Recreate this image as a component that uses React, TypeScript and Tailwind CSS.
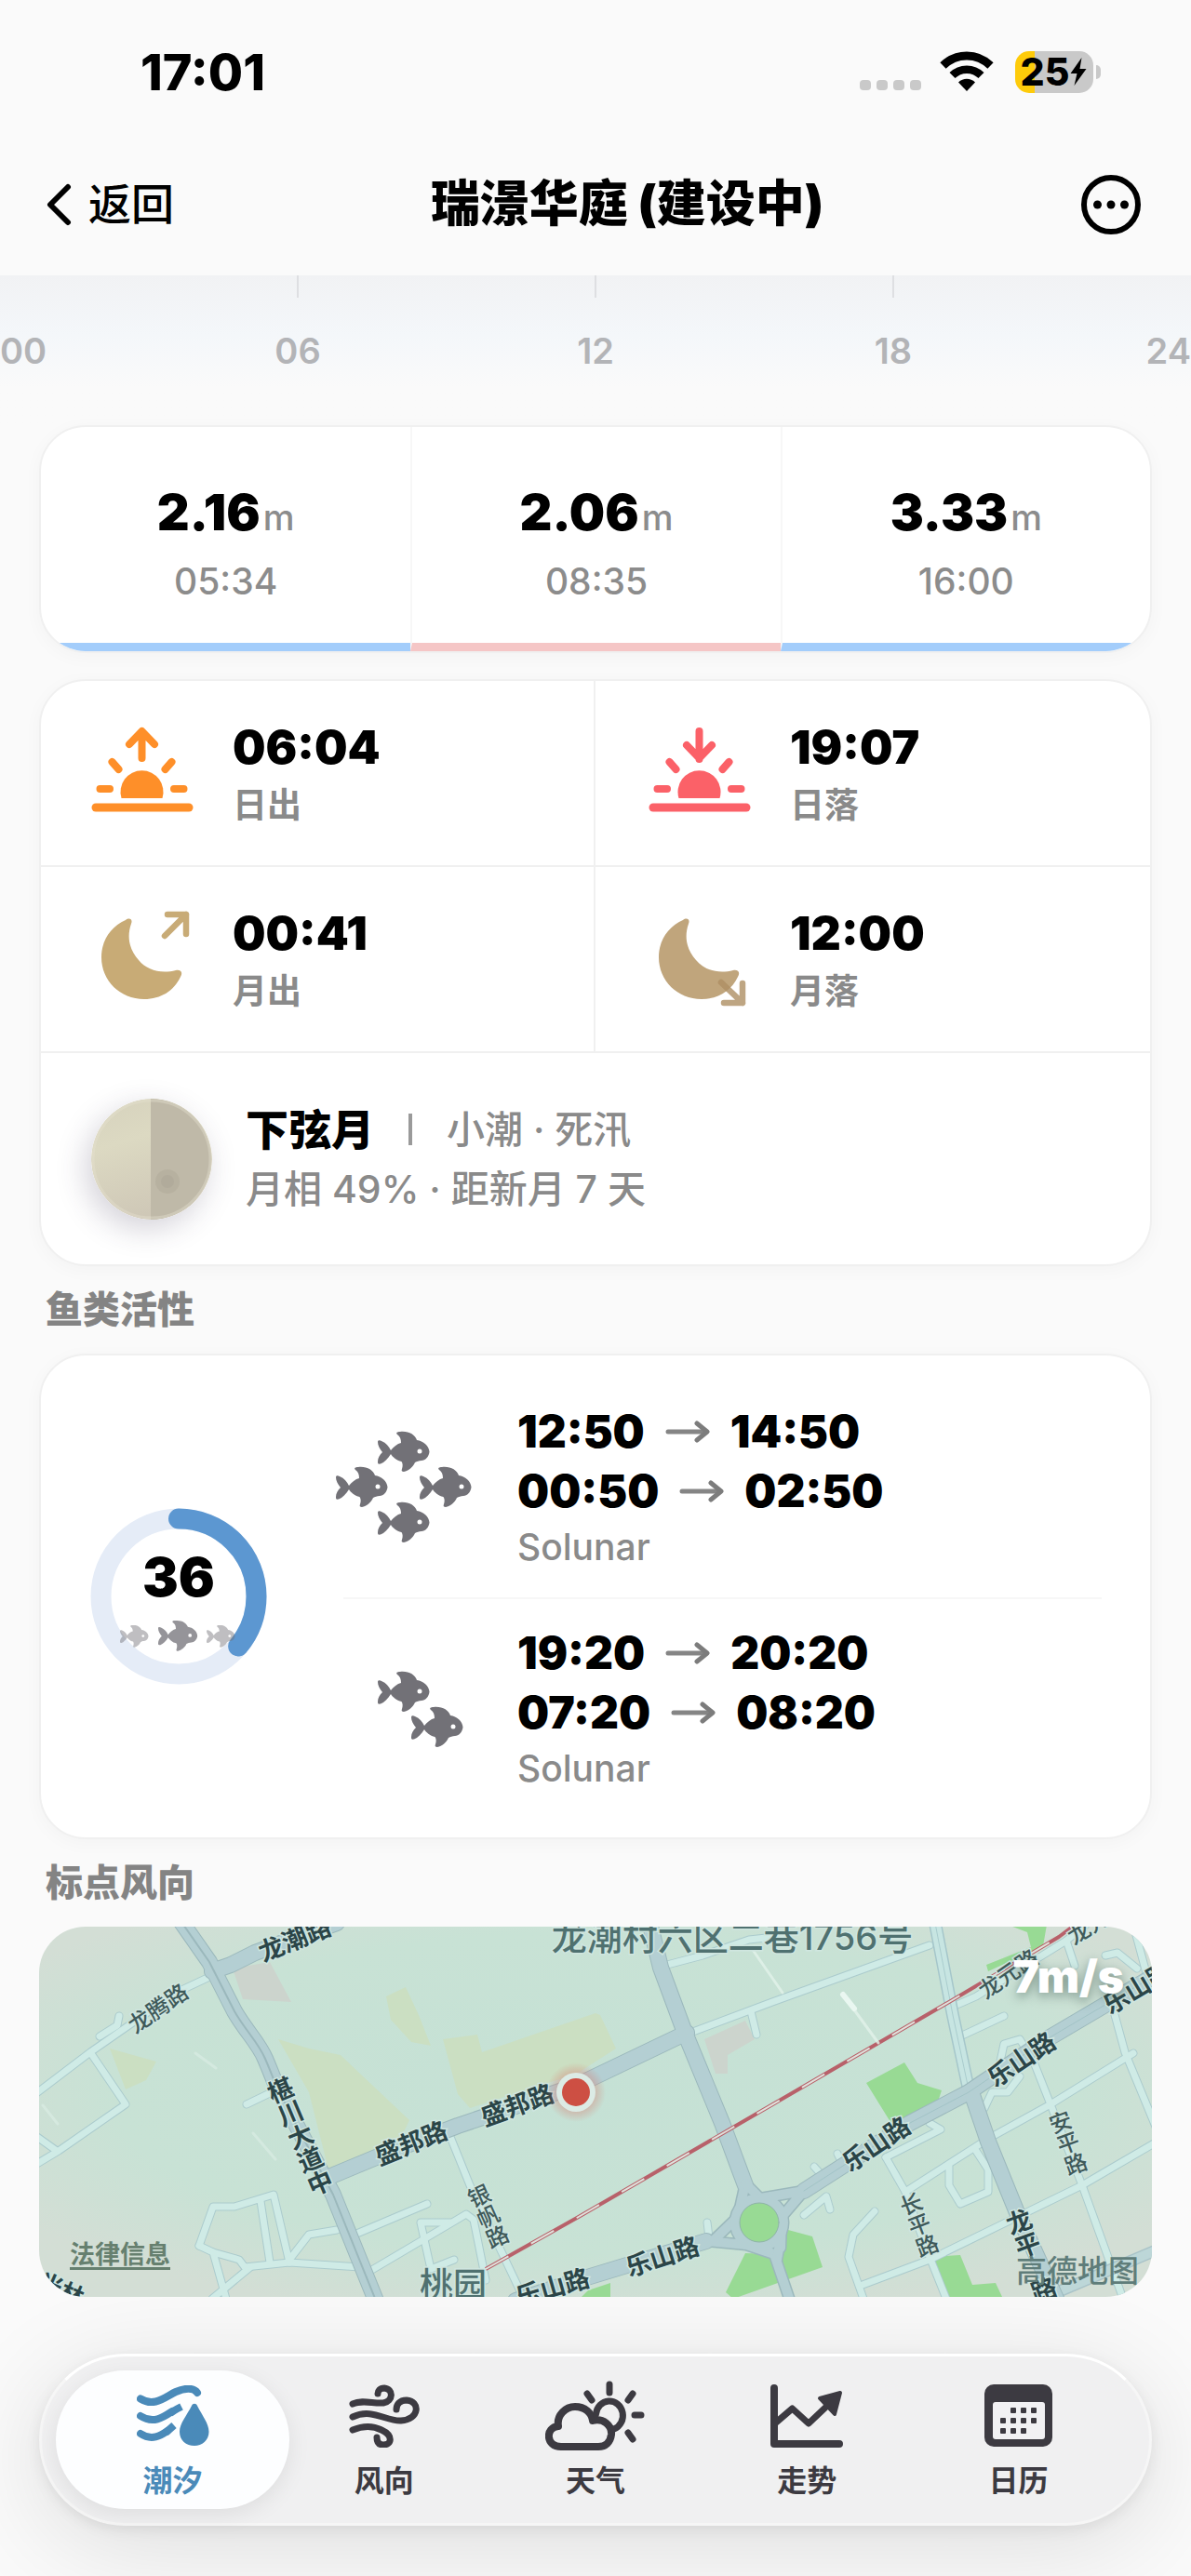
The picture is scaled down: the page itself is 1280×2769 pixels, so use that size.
import { useState } from 'react';

const FONT = "font-['Inter','Noto_Sans_CJK_SC',sans-serif]";

const CARD = 'rounded-[50px] bg-white border-2 border-[#f0f0f0] shadow-[0_4px_20px_rgba(0,0,0,0.03)] overflow-hidden';

/* ---------- icons ---------- */

function SunIcon({ down = false }: { down?: boolean }) {
    const color = down ? '#fb6168' : '#fe8f29';
    return (
        <svg width="110" height="100" viewBox="0 0 110 100" fill="none" stroke={color} strokeWidth="8" strokeLinecap="round" strokeLinejoin="round" aria-hidden="true">
            {down ? (
                <path d="M54.500 5v30M41 20l13.500 14L68 20" />
            ) : (
                <path d="M54.500 6v28M41 19L54.500 5 68 19" />
            )}
            <path d="M22.500 38l7 8M86.500 38l-7 8M9.500 67H20M89 67h10.500" />
            <path d="M5 87h100" strokeWidth="9" />
            <path d="M32.500 77a23 23 0 1 1 44 0z" fill={color} stroke="none" />
        </svg>
    );
}

function MoonIcon({ down = false }: { down?: boolean }) {
    const color = down ? '#c0a57c' : '#c8ab76';
    return (
        <svg width="110" height="104" viewBox="-11 0 110 104" fill="none" stroke={color} strokeWidth="6.500" strokeLinecap="round" strokeLinejoin="round" aria-hidden="true">
            <path
                d="M26 10C30 7 34 9 32 14 C27 28 30 42 40 53 C49 64 64 68 80 64 C85 63 88 66 85 71 C78 86 64 95 46 95 C20 95 0 75 0 50 C0 32 10 17 26 10Z"
                fill={color}
                stroke="none"
            />
            {down ? (
                <g stroke="#ae8f63" opacity="0.8">
                    <path d="M67 77l23 22M70 99h20V78" />
                </g>
            ) : (
                <path d="M68 27L91 4M71 4h20v21" />
            )}
        </svg>
    );
}

interface FishProps {
    x: number;
    y: number;
    scale?: number;
    opacity?: number;
}

function Fish({ x, y, scale = 1, opacity = 1 }: FishProps) {
    return (
        <g transform={`translate(${x} ${y}) scale(${scale})`} opacity={opacity}>
            <path
                d="M0 11C0 9 2 9 4 10C9 12 12 16 14 20C17 16 21 13 25 12C25 8 24 5 21 3C19 1 21 0 24 0C33 -1 40 3 42 9C49 10 55 15 55.500 21.500C55 27 51 31 47 31C44 31 42 32 40 33C38 38 33 42 28 43C26 43 25 42 26 40C27 37 27 34 25.500 32C20 31 16 27 14 24C11 29 7 33 3 34.500C0 35 0 34 0 32C0 28 2 25 5 22C2 18 0 15 0 11Z"
                fill="#727177"
            />
            <circle cx="45" cy="21" r="2.500" fill="#fff" />
        </g>
    );
}

function ArrowRight() {
    return (
        <svg width="50" height="24" viewBox="0 0 50 24" fill="none" stroke="#858585" strokeWidth="5" strokeLinecap="round" strokeLinejoin="round" aria-hidden="true">
            <path d="M4 12h41" />
            <path d="M35 3l11 9-11 9" stroke="#7c7c7c" />
        </svg>
    );
}

function TideIcon() {
    return (
        <svg width="78" height="66" viewBox="0 0 78 66" fill="none" stroke="#4a8ab9" strokeWidth="8" strokeLinecap="round" aria-hidden="true">
            <path d="M4 14.500C19 24 31 12 42 7C51 3 61 2 65 8" />
            <path d="M4 33C18 42 29 34 38 28" />
            <path d="M36 30C40 27 44 25 48 23" strokeLinecap="butt" />
            <path d="M4 52C16 60 26 54 33 49" />
            <path d="M31 51L40 43" strokeLinecap="butt" />
            <path d="M59 22C60 19 64 19 65 22C70 32 77.500 41 77.500 50C77.500 59 70 65 62 65C53 65 46 59 46 50C46 41 54 32 59 22Z" fill="#4a8ab9" stroke="none" />
        </svg>
    );
}

function WindIcon() {
    return (
        <svg width="76" height="68" viewBox="0 0 76 68" fill="none" stroke="#3c3a41" strokeWidth="7" strokeLinecap="round" aria-hidden="true">
            <path d="M4 21C15 16 26 21 37 20C48 18 48 5 38 4C33 4 31 7 31 10" />
            <path d="M4 35C25 25 40 40 56 39C76 38 77 18 62 17C54 17 51 22 51 27" />
            <path d="M4 49C16 44 27 45 35 49C48 55 46 65 37 65C32 65 30 62 30 57" />
        </svg>
    );
}

function WeatherIcon() {
    return (
        <svg width="107" height="76" viewBox="0 0 107 76" fill="none" stroke="#3c3a41" strokeWidth="8" strokeLinecap="round" strokeLinejoin="round" aria-hidden="true">
            <path d="M17 71C0 71 0 50 14 49C12 37 22 28 32 28C43 28 50 35 51 43C62 40 72 48 71 58C70 66 65 71 57 71Z" />
            <path d="M54.500 36A14.500 15.500 0 1 1 74 52" strokeWidth="7" />
            <path d="M69 4v9M45 14l5 7M94 14l-5 7M96 37h7M89 56l5 7" strokeWidth="7" />
        </svg>
    );
}

function TrendIcon() {
    return (
        <svg width="80" height="70" viewBox="0 0 80 70" fill="none" stroke="#3c3a41" strokeWidth="8" strokeLinecap="round" strokeLinejoin="round" aria-hidden="true">
            <path d="M5 5v60h70" />
            <path d="M7 42L24.500 27L42 43L61 25" strokeWidth="7" />
            <path d="M54 16L76 10L70 33Z" fill="#3c3a41" strokeWidth="4" />
        </svg>
    );
}

function CalendarIcon() {
    const dots = [
        [31, 28], [42, 28], [53, 28],
        [20, 39], [31, 39], [42, 39], [53, 39],
        [20, 50], [31, 50], [42, 50],
    ];
    return (
        <svg width="73" height="68" viewBox="0 0 73 68" aria-hidden="true">
            <rect width="73" height="67" rx="10" fill="#3c3a41" />
            <rect x="9" y="19" width="56" height="40" rx="3" fill="#f1f1f3" />
            {dots.map(([x, y]) => (
                <rect key={`${x}-${y}`} x={x - 3} y={y - 3} width="6" height="6" rx="1" fill="#3c3a41" />
            ))}
        </svg>
    );
}

/* ---------- map ---------- */

const MAIN_ROADS = [
    'M153 -5L183 38L210 91C222 112 236 125 243 142C250 158 252 165 258 178L316 288L362 402',
    'M186 48L206 41L232 28L320 -4',
    'M314 268L379 241L450 214L577 171L696 114',
    'M656 -5L668 44L694 114L734 211L759 278',
    'M1200 52L1083 121L999 178L936 211L822 284',
    'M717 338L589 377L512 402',
    'M1003 181L1020 231L1050 305L1094 402',
];

const JUNCTION_ROADS = [
    'M759 276L751 312L724 338',
    'M759 276L775 292L822 284L798 312L797 345',
    'M717 338L760 342L790 352L807 402',
    'M797 335L793 358',
];

const SIDE_ROADS = [
    'M181 55L147 71L55 135L-4 180',
    'M57 138L93 191L21 241L-4 256',
    'M-2 226L19 241',
    'M65 118L84 106L86 96',
    'M223 191L250 178',
    'M172 343L187 301L210 301L252 288L269 361',
    'M238 295L248 361',
    'M172 343L187 350L201 400',
    'M187 350L215 358L221 366L269 361L345 366',
    'M227 366L186 400',
    'M269 358L290 331L320 326',
    'M339 331L417 298',
    'M356 370L444 318L459 309L467 315L480 380',
    'M442 318L410 318L421 368L446 358',
    'M440 221L463 278L520 398',
    'M700 114L788 81L957 20',
    'M675 41L713 31L763 14L800 10',
    'M765 91L771 116',
    'M982 86L1007 75L1104 15L1125 -2',
    'M990 118L1037 96',
    'M1155 91L1167 135L1200 215',
    'M1176 136L1087 191L1020 228L931 285',
    'M1070 148L1087 191L1121 278L1165 400',
    'M1200 232L1121 278L957 358L885 385',
    'M910 248L931 285L957 355L975 400',
    'M910 248L969 218L957 211',
    'M898 306L875 331L870 355L886 400',
    'M978 258L978 278L990 298L1020 285L1020 261L1007 241',
    'M1016 195L1024 178L1041 178L1054 161',
    'M1033 145L1037 126L1054 121L1062 134',
    'M1146 31L1159 28L1180 45',
    'M1176 -2L1190 50',
    'M1104 15L1113 42',
    'M822 310L846 290L850 304',
    'M718 318L720 334',
    'M833 258L842 268',
    'M858 244L864 256',
];

const PARKS = [
    'M889 168L930 146L944 168L970 176L966 188L930 208L915 210Z',
    'M805 326L831 333L842 366L746 400L738 393L759 351L790 352Z',
    'M961 355L990 353L1003 385L1028 383L1036 400L976 400Z',
    'M581 400L590 391L614 383V400Z',
    'M1041 -2H1083L1079 21L1020 48L1018 41L1066 22L1062 6Z',
];

const FIELDS = [
    'M257 121L290 131L324 138L345 158L398 208L385 235L311 261L290 178Z',
    'M373 75L394 65L408 95L421 128L400 124L378 100Z',
    'M434 121L471 116L476 135L598 93L603 95L620 131L578 158L463 195L450 180Z',
    'M76 131L126 145L115 165L93 175Z',
];

interface RoadLabel {
    text: string;
    x: number;
    y: number;
    angle: number;
    size: number;
    minor?: boolean;
    vertical?: boolean;
}

const LABELS: RoadLabel[] = [
    { text: '龙潮路', x: 275, y: 14, angle: -22, size: 27 },
    { text: '龙腾路', x: 128, y: 88, angle: -35, size: 24, minor: true },
    { text: '椹川大道中', x: 279, y: 226, angle: -23, size: 27, vertical: true },
    { text: '盛邦路', x: 400, y: 233, angle: -22, size: 27 },
    { text: '盛邦路', x: 514, y: 192, angle: -20, size: 27 },
    { text: '银帆路', x: 481, y: 312, angle: -24, size: 24, minor: true, vertical: true },
    { text: '乐山路', x: 552, y: 388, angle: -16, size: 27 },
    { text: '乐山路', x: 670, y: 355, angle: -18, size: 27 },
    { text: '乐山路', x: 900, y: 234, angle: -34, size: 27 },
    { text: '乐山路', x: 1056, y: 143, angle: -34, size: 27 },
    { text: '乐山路', x: 1181, y: 66, angle: -31, size: 27 },
    { text: '龙元路', x: 1042, y: 51, angle: -35, size: 24, minor: true },
    { text: '龙元', x: 1128, y: 0, angle: -32, size: 24, minor: true },
    { text: '长平路', x: 944, y: 321, angle: -21, size: 24, minor: true, vertical: true },
    { text: '安平路', x: 1104, y: 233, angle: -20, size: 24, minor: true, vertical: true },
    { text: '龙平', x: 1056, y: 330, angle: -20, size: 27, vertical: true },
    { text: '路', x: 1080, y: 391, angle: -20, size: 27 },
    { text: '米林', x: 24, y: 390, angle: 24, size: 25 },
];

function WindMap() {
    return (
        <div className="relative overflow-hidden rounded-[50px]">
            <svg viewBox="0 0 1196 398" className="block w-full" role="img" aria-label="标点风向">
                <defs>
                    <radialGradient id="tint" cx="50%" cy="45%" r="62%">
                        <stop offset="0" stopColor="#c5e1d5" />
                        <stop offset="0.7" stopColor="#c8e2d5" />
                        <stop offset="1" stopColor="#d3ded5" />
                    </radialGradient>
                    <radialGradient id="glow">
                        <stop offset="0.4" stopColor="#d9796c" stopOpacity="0.6" />
                        <stop offset="1" stopColor="#d9796c" stopOpacity="0" />
                    </radialGradient>
                </defs>
                <rect width="1196" height="398" fill="url(#tint)" />

                {FIELDS.map((d) => <path key={d} d={d} fill="#cbdfc2" />)}
                <path d="M208 45L248 38L271 81L219 78ZM715 121L759 101L769 121L740 138V158H727Z" fill="#ccd4cd" />
                {PARKS.map((d) => <path key={d} d={d} fill="#98da94" />)}

                <g fill="none" strokeLinecap="round" strokeLinejoin="round">
                    {SIDE_ROADS.map((d) => <path key={d} d={d} stroke="#abcbcd" strokeWidth="9" />)}
                    {SIDE_ROADS.map((d) => <path key={d} d={d} stroke="#cfebe6" strokeWidth="7" />)}
                    <path d="M963 -4L982 95L999 175" stroke="#a5c6ca" strokeWidth="14" />
                    <path d="M963 -4L982 95L999 175" stroke="#c7e5e2" strokeWidth="11" />
                    <path d="M963 -4L982 95L999 175" stroke="#a9cccd" strokeWidth="1" />
                    <path d="M1087 396L1200 348" stroke="#a9c3c8" strokeWidth="13" />
                    <path d="M1087 396L1200 348" stroke="#bdd7d8" strokeWidth="10" />

                    {MAIN_ROADS.map((d) => <path key={d} d={d} stroke="#9bb8bc" strokeWidth="18" />)}
                    {JUNCTION_ROADS.map((d) => <path key={d} d={d} stroke="#9bb8bc" strokeWidth="13" />)}
                    <circle cx="774" cy="318" r="26" stroke="#9bb8bc" strokeWidth="13" />
                    {MAIN_ROADS.map((d) => <path key={d} d={d} stroke="#b4cfd3" strokeWidth="16" />)}
                    {JUNCTION_ROADS.map((d) => <path key={d} d={d} stroke="#b4cfd3" strokeWidth="10" />)}
                    <circle cx="774" cy="318" r="26" stroke="#b4cfd3" strokeWidth="10" />
                    <circle cx="774" cy="318" r="21" fill="#98da94" stroke="#8fb5a8" strokeWidth="1" />
                    <path d={MAIN_ROADS[0]} stroke="#9bb8bc" strokeWidth="2" />
                    <path d={MAIN_ROADS[4]} stroke="#a2c3c6" strokeWidth="1" />

                    <path d="M480 368L578 313L742 218L978 81L1096 11L1116 -4" stroke="#b8616a" strokeWidth="4" strokeLinecap="butt" />
                    <path d="M480 368L578 313L742 218L978 81L1096 11L1116 -4" stroke="#dfe2dc" strokeWidth="2" strokeDasharray="28 28" strokeLinecap="butt" />

                    {/* wind streaks */}
                    <path d="M767 25L799 71M864 73L902 125" stroke="#e2f3ea" strokeWidth="3" opacity="0.8" />
                    <path d="M864 73L876 88" stroke="#eaf7f1" strokeWidth="6" />
                    <path d="M168 136L190 152M230 222L254 250M4 192L20 212" stroke="#dcefe6" strokeWidth="3" opacity="0.6" />
                </g>

                {LABELS.map((label, i) => (
                    <text
                        key={i}
                        transform={`translate(${label.x} ${label.y}) rotate(${label.angle})`}
                        fontSize={label.size}
                        fontWeight={label.minor ? 500 : 700}
                        fill={label.minor ? '#3f5a5a' : '#2b4548'}
                        stroke="#cfe6e0"
                        strokeWidth="3"
                        paintOrder="stroke"
                        textAnchor="middle"
                        dominantBaseline="central"
                        className={label.vertical ? '[writing-mode:vertical-rl]' : ''}
                    >
                        {label.text}
                    </text>
                ))}
                <g fill="#4f7170" stroke="#cfe6e0" strokeWidth="3" paintOrder="stroke" textAnchor="middle" fontWeight="500">
                    <text x="745" y="25" fontSize="38">龙潮村六区二巷1756号</text>
                    <text x="445" y="398" fontSize="36">桃园</text>
                </g>

                <circle cx="577" cy="178" r="32" fill="url(#glow)" />
                <circle cx="577" cy="178" r="21" fill="#dcebe5" />
                <circle cx="577" cy="178" r="15" fill="#cd4f43" />
            </svg>
            <a href="#legal" className="absolute bottom-[28px] left-[33px] text-[27px] leading-[34px] font-bold text-[#66806f] underline decoration-3 underline-offset-4">
                法律信息
            </a>
            <span className="absolute top-[24px] right-[30px] text-[48px] leading-[60px] font-black text-white [text-shadow:0_4px_12px_rgba(60,90,80,0.6)]">
                7m/s
            </span>
            <span className="absolute right-[14px] bottom-[6px] text-[33px] leading-[44px] font-medium text-[#5f7d7a]">高德地图</span>
        </div>
    );
}

/* ---------- sections ---------- */

function StatusBar() {
    return (
        <div className="flex h-[150px] items-center justify-between pt-1 pr-[97px] pl-[151px]">
            <span className="text-[54px] font-extrabold text-black">17:01</span>
            <div className="flex items-center">
                <div className="mt-7 flex gap-[6px]">
                    {[0, 1, 2, 3].map((i) => (
                        <span key={i} className="h-[11px] w-[12px] rounded-[4px] bg-[#c9c9c9]" />
                    ))}
                </div>
                <svg width="58" height="44" viewBox="0 0 58 44" className="ml-5" fill="none" stroke="#000" strokeWidth="9" aria-hidden="true">
                    <path d="M3.500 15.500C18 1.500 40 1.500 54.500 15.500" />
                    <path d="M13.500 26C22 17.500 36 17.500 44.500 26" strokeWidth="8.500" />
                    <path d="M29 43L20 33.500C25 28.500 33 28.500 38 33.500Z" fill="#000" stroke="none" />
                </svg>
                <div className="ml-[23px] flex items-center gap-[3px]">
                    <div className="flex h-[45px] w-[84px] items-center justify-center rounded-[15px] bg-[linear-gradient(90deg,#fecb0a_0_25%,#c9c9c9_25%)]">
                        <span className="text-[41px] leading-none font-extrabold text-black">25</span>
                        <svg width="20" height="30" viewBox="0 0 19 30" aria-hidden="true">
                            <path d="M13 0L1 17h7L5 30 18 12h-7z" fill="#000" />
                        </svg>
                    </div>
                    <span className="h-[15px] w-[5px] rounded-r-full bg-[#c9c9c9]" />
                </div>
            </div>
        </div>
    );
}

function NavBar() {
    return (
        <header className="grid h-[146px] grid-cols-[auto_1fr_auto] items-center pr-[53px] pb-[7px] pl-[47px]">
            <button type="button" className="flex items-center gap-[16px] text-[46px] font-medium text-black">
                <svg width="32" height="46" viewBox="0 0 32 46" fill="none" stroke="#000" strokeWidth="6" strokeLinecap="round" strokeLinejoin="round" aria-hidden="true">
                    <path d="M26 4L7 23l19 19" />
                </svg>
                返回
            </button>
            <h1 className="text-center text-[53px] font-black text-black">瑞澋华庭 (建设中)</h1>
            <button type="button" aria-label="更多">
                <svg width="66" height="66" viewBox="0 0 66 66" aria-hidden="true">
                    <circle cx="33" cy="33" r="29" fill="none" stroke="#000" strokeWidth="6" />
                    <circle cx="18.500" cy="33" r="4.500" />
                    <circle cx="33" cy="33" r="4.500" />
                    <circle cx="47.500" cy="33" r="4.500" />
                </svg>
            </button>
        </header>
    );
}

const HOURS = ['00', '06', '12', '18', '24'];

function HourScale() {
    return (
        <div className="grid h-[161px] grid-cols-[1fr_2fr_2fr_2fr_1fr] bg-linear-to-b from-[#f1f2f4] via-[#f4f7fa] via-40% to-[#fafafa] to-75% text-[38px] leading-[48px] font-semibold text-[#b3b4b7]">
            {HOURS.map((hour, i) => {
                const first = i === 0;
                const last = i === HOURS.length - 1;
                return (
                    <div key={hour} className={`flex flex-col gap-[33px] ${first ? 'items-start' : last ? 'items-end' : 'items-center'}`}>
                        <span className={`h-[24px] w-[2px] ${first || last ? '' : 'bg-[#dedfe2]'}`} />
                        {hour}
                    </div>
                );
            })}
        </div>
    );
}

const TIDES = [
    { height: '2.16', time: '05:34', high: false },
    { height: '2.06', time: '08:35', high: true },
    { height: '3.33', time: '16:00', high: false },
];

function TideCard() {
    return (
        <section className={`grid h-[245px] grid-cols-3 ${CARD}`}>
            {TIDES.map((tide, i) => (
                <div key={tide.time} className={`flex flex-col items-center border-b-9 pt-[56px] ${tide.high ? 'border-b-[#f5c6c6]' : 'border-b-[#a3cdfb]'} ${i > 0 ? 'border-l-2 border-l-[#f7f7f7]' : ''}`}>
                    <div className="flex items-baseline gap-[3px] leading-[72px]">
                        <span className="text-[54px] font-black text-black">{tide.height}</span>
                        <span className="text-[38px] font-medium text-[#8c8c8c]">m</span>
                    </div>
                    <span className="text-[39px] leading-[66px] font-medium text-[#8c8c8c]">{tide.time}</span>
                </div>
            ))}
        </section>
    );
}

const EVENTS = [
    { time: '06:04', label: '日出', icon: <SunIcon /> },
    { time: '19:07', label: '日落', icon: <SunIcon down /> },
    { time: '00:41', label: '月出', icon: <MoonIcon /> },
    { time: '12:00', label: '月落', icon: <MoonIcon down /> },
];

function AstroCard() {
    return (
        <section className={`mt-[28px] ${CARD}`}>
            <div className="grid grid-cols-2">
                {EVENTS.map((event, i) => (
                    <div key={event.label} className={`flex h-[200px] items-center gap-[42px] border-b-2 border-[#f0f0f0] ${i % 2 === 0 ? 'border-r-2 pl-[54px]' : 'pl-[57px]'}`}>
                        {event.icon}
                        <div className="flex flex-col pt-[6px]">
                            <span className="text-[50px] leading-[64px] font-black text-black">{event.time}</span>
                            <span className="text-[37px] leading-[62px] font-bold text-[#8a8a8a]">{event.label}</span>
                        </div>
                    </div>
                ))}
            </div>
            <div className="flex h-[227px] items-center gap-[36px] pl-[54px]">
                <svg width="130" height="130" viewBox="0 0 130 130" className="rounded-full shadow-[-6px_10px_32px_rgba(60,50,80,0.22)]" aria-hidden="true">
                    <defs>
                        <linearGradient id="moon-lit" x1="0" y1="0" x2="0.3" y2="1">
                            <stop offset="0" stopColor="#d6d2bd" />
                            <stop offset="0.4" stopColor="#dcd9c2" />
                            <stop offset="1" stopColor="#cfc8b7" />
                        </linearGradient>
                    </defs>
                    <circle cx="65" cy="65" r="65" fill="url(#moon-lit)" />
                    <path d="M64 0a65 65 0 0 1 0 130z" fill="#bfb9a8" />
                    <circle cx="82" cy="89" r="13" fill="#b7b1a0" />
                    <circle cx="82" cy="89" r="7" fill="#b1ab9b" />
                    <circle cx="65" cy="65" r="63" fill="none" stroke="#e6e0cf" strokeWidth="3" opacity="0.4" />
                </svg>
                <div className="flex flex-col text-[41px] leading-[64px] font-medium text-[#8a8a8a]">
                    <div className="flex items-center">
                        <span className="text-[46px] font-black text-black">下弦月</span>
                        <span className="mx-[37px] h-[34px] w-[4px] bg-[#9a9a9a]" />
                        <span>小潮 · 死汛</span>
                    </div>
                    <span>月相 49% · 距新月 7 天</span>
                </div>
            </div>
        </section>
    );
}

function SectionTitle({ children }: { children: string }) {
    return <h2 className="flex h-[94px] items-center pl-[7px] text-[40px] font-black text-[#848484]">{children}</h2>;
}

const PERIODS = [
    { ranges: [['12:50', '14:50'], ['00:50', '02:50']], major: true },
    { ranges: [['19:20', '20:20'], ['07:20', '08:20']], major: false },
];

function ActivityRing({ score }: { score: number }) {
    const length = 2 * Math.PI * 83.5;
    return (
        <div className="relative h-[190px] w-[190px] shrink-0">
            <svg width="190" height="190" viewBox="0 0 190 190" fill="none" aria-hidden="true">
                <circle cx="95" cy="95" r="83.500" stroke="#e5ecf7" strokeWidth="22" />
                <Fish x={32} y={126} scale={0.55} opacity={0.45} />
                <Fish x={73} y={121} scale={0.76} opacity={0.75} />
                <circle
                    cx="95"
                    cy="95"
                    r="83.500"
                    stroke="#5c97d1"
                    strokeWidth="22"
                    strokeLinecap="round"
                    strokeDasharray={`${(length * score) / 100} ${length}`}
                    transform="rotate(-90 95 95)"
                />
                <Fish x={125} y={126} scale={0.55} opacity={0.45} />
            </svg>
            <span className="absolute inset-x-0 top-[40px] text-center text-[58px] leading-[68px] font-black text-black">{score}</span>
        </div>
    );
}

function ActivityCard() {
    return (
        <section className={`flex items-center pr-[52px] pl-[53px] ${CARD}`}>
            <ActivityRing score={36} />
            <div className="ml-[82px] flex grow flex-col pt-[24px] pb-[20px]">
                {PERIODS.map((period, i) => (
                    <div key={i} className={`flex items-center py-[26px] ${i > 0 ? 'border-t-2 border-[#f7f7f7]' : ''}`}>
                        <svg width="140" height="120" viewBox="8 0 140 120" className="shrink-0 overflow-visible" aria-hidden="true">
                            {period.major ? (
                                <>
                                    <Fish x={45} y={0} />
                                    <Fish x={0} y={38} />
                                    <Fish x={90} y={38} />
                                    <Fish x={45} y={76} />
                                </>
                            ) : (
                                <>
                                    <Fish x={45} y={20} />
                                    <Fish x={81} y={58} />
                                </>
                            )}
                        </svg>
                        <div className="ml-[47px]">
                            {period.ranges.map(([from, to]) => (
                                <div key={from} className="flex items-center gap-[21px] text-[48px] leading-[64px] font-black text-black">
                                    <span>{from}</span>
                                    <ArrowRight />
                                    <span>{to}</span>
                                </div>
                            ))}
                            <div className="text-[39px] leading-[56px] font-medium text-[#8a8a8a]">Solunar</div>
                        </div>
                    </div>
                ))}
            </div>
        </section>
    );
}

const TABS = [
    { label: '潮汐', icon: <TideIcon /> },
    { label: '风向', icon: <WindIcon /> },
    { label: '天气', icon: <WeatherIcon /> },
    { label: '走势', icon: <TrendIcon /> },
    { label: '日历', icon: <CalendarIcon /> },
];

function TabBar() {
    const [active, setActive] = useState('潮汐');
    return (
        <nav className="mt-[61px] grid h-[185px] grid-cols-5 rounded-full border-3 border-[#f6f6f6] border-t-white bg-[#f0f0f1] px-[27px] shadow-[0_20px_110px_rgba(0,0,0,0.12),0_4px_16px_rgba(0,0,0,0.07)]">
            {TABS.map((tab) => {
                const selected = tab.label === active;
                return (
                    <button
                        key={tab.label}
                        type="button"
                        aria-pressed={selected}
                        onClick={() => setActive(tab.label)}
                        className={`my-[15px] -mx-[12px] flex flex-col items-center justify-center gap-[12px] rounded-full text-[32px] leading-[40px] font-bold ${selected ? 'bg-[#fdfeff] text-[#4a8ab9] shadow-[0_6px_24px_rgba(0,0,0,0.08)]' : 'text-[#3c3a41]'
                            }`}
                    >
                        <span className="flex h-[76px] items-center">{tab.icon}</span>
                        {tab.label}
                    </button>
                );
            })}
        </nav>
    );
}

export default function App() {
    return (
        <div className={`min-h-screen overflow-hidden bg-[#fafafa] ${FONT}`} lang="zh-CN">
            <StatusBar />
            <NavBar />
            <HourScale />
            <main className="mx-[42px] pb-[53px]">
                <TideCard />
                <AstroCard />
                <SectionTitle>鱼类活性</SectionTitle>
                <ActivityCard />
                <SectionTitle>标点风向</SectionTitle>
                <WindMap />
                <TabBar />
            </main>
        </div>
    );
}
